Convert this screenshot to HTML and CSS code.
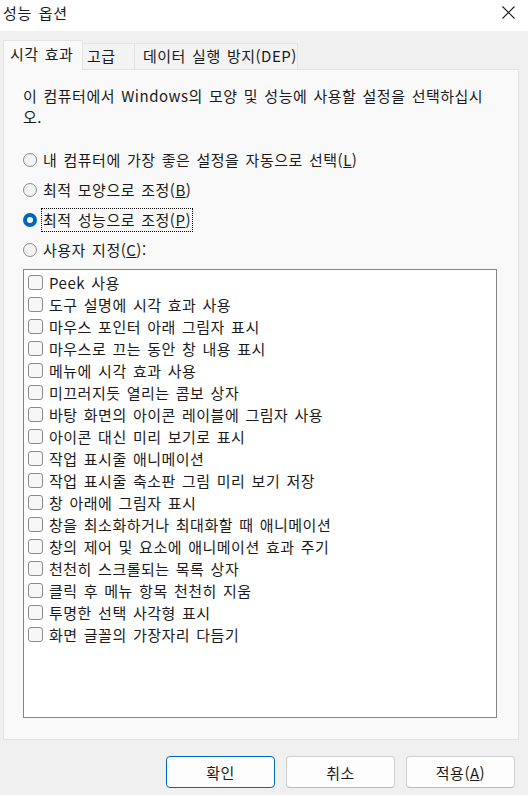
FILE: index.html
```html
<!DOCTYPE html>
<html lang="ko">
<head>
<meta charset="utf-8">
<title>성능 옵션</title>
<link rel="stylesheet" href="styles.css">
</head>
<body>
<div class="window">
  <div class="titlebar">
    <span class="title">성능 옵션</span>
    <svg class="close" width="13" height="13" viewBox="0 0 13 13"><path d="M0.5 0.5 L12.5 12.5 M12.5 0.5 L0.5 12.5" stroke="#1a1a1a" stroke-width="1.1" fill="none"/></svg>
  </div>
  <div class="tabs">
    <div class="tab active">시각 효과</div>
    <div class="tab">고급</div>
    <div class="tab">데이터 실행 방지(DEP)</div>
  </div>
  <div class="panel">
    <p class="desc">이 컴퓨터에서 Windows의 모양 및 성능에 사용할 설정을 선택하십시오.</p>
    <div class="radios">
      <div class="radio-row"><span class="radio"></span><span class="rlabel">내 컴퓨터에 가장 좋은 설정을 자동으로 선택(<u>L</u>)</span></div>
      <div class="radio-row"><span class="radio"></span><span class="rlabel">최적 모양으로 조정(<u>B</u>)</span></div>
      <div class="radio-row"><span class="radio checked"></span><span class="rlabel focus">최적 성능으로 조정(<u>P</u>)</span></div>
      <div class="radio-row"><span class="radio"></span><span class="rlabel">사용자 지정(<u>C</u>):</span></div>
    </div>
    <div class="list">
      <div class="item"><span class="box"></span>Peek 사용</div>
      <div class="item"><span class="box"></span>도구 설명에 시각 효과 사용</div>
      <div class="item"><span class="box"></span>마우스 포인터 아래 그림자 표시</div>
      <div class="item"><span class="box"></span>마우스로 끄는 동안 창 내용 표시</div>
      <div class="item"><span class="box"></span>메뉴에 시각 효과 사용</div>
      <div class="item"><span class="box"></span>미끄러지듯 열리는 콤보 상자</div>
      <div class="item"><span class="box"></span>바탕 화면의 아이콘 레이블에 그림자 사용</div>
      <div class="item"><span class="box"></span>아이콘 대신 미리 보기로 표시</div>
      <div class="item"><span class="box"></span>작업 표시줄 애니메이션</div>
      <div class="item"><span class="box"></span>작업 표시줄 축소판 그림 미리 보기 저장</div>
      <div class="item"><span class="box"></span>창 아래에 그림자 표시</div>
      <div class="item"><span class="box"></span>창을 최소화하거나 최대화할 때 애니메이션</div>
      <div class="item"><span class="box"></span>창의 제어 및 요소에 애니메이션 효과 주기</div>
      <div class="item"><span class="box"></span>천천히 스크롤되는 목록 상자</div>
      <div class="item"><span class="box"></span>클릭 후 메뉴 항목 천천히 지움</div>
      <div class="item"><span class="box"></span>투명한 선택 사각형 표시</div>
      <div class="item"><span class="box"></span>화면 글꼴의 가장자리 다듬기</div>
    </div>
  </div>
  <div class="buttons">
    <button class="btn default">확인</button>
    <button class="btn">취소</button>
    <button class="btn">적용(<u>A</u>)</button>
  </div>
</div>
</body>
</html>
```
FILE: styles.css
```css
html, body {
  margin: 0;
  padding: 0;
}
body {
  width: 528px;
  height: 795px;
  overflow: hidden;
  background: #f0f0f0;
  font-family: "Noto Sans CJK KR", "Noto Sans", sans-serif;
  font-size: 15px;
  letter-spacing: 0.5px;
  word-spacing: 1.5px;
  color: #1a1a1a;
}
.window {
  display: flex;
  flex-direction: column;
  height: 795px;
}
.titlebar {
  height: 31px;
  background: #ffffff;
  display: flex;
  align-items: center;
  justify-content: space-between;
  padding: 0 13px 0 3px;
}
.title {
  font-size: 15px;
  letter-spacing: 0.8px;
  line-height: 20px;
  margin-top: -6px;
}
.close {
  margin-top: -6px;
}
.tabs {
  display: flex;
  align-items: flex-end;
  padding: 10px 0 0 3px;
  height: 28px;
  position: relative;
  z-index: 1;
}
.tab {
  height: 26px;
  line-height: 24px;
  padding: 0 0 0 6px;
  border: 1px solid #e3e3e3;
  border-bottom: none;
  background: #f3f3f3;
  margin-left: -1px;
  box-sizing: border-box;
  white-space: nowrap;
}
.tab:nth-child(2) { width: 53px; padding-left: 4px; }
.tab:nth-child(3) { width: 164px; padding-left: 8px; }
.tab.active {
  height: 30px;
  margin-left: 0;
  margin-bottom: -1px;
  width: 80px;
  background: #f9f9f9;
  line-height: 26px;
  padding-left: 6px;
}
.panel {
  margin: 0 9px 0 3px;
  height: 671px;
  box-sizing: border-box;
  border: 1px solid #e3e3e3;
  background: #f9f9f9;
  padding: 15px 0 0 19px;
}
.desc {
  margin: 0;
  line-height: 21px;
  width: 470px;
}
.radios {
  margin-top: 18px;
  display: flex;
  flex-direction: column;
}
.radio-row {
  height: 30px;
  display: flex;
  align-items: center;
}
.radio {
  width: 14px;
  height: 14px;
  box-sizing: border-box;
  border-radius: 50%;
  border: 1px solid #8b8b8b;
  background: #f3f3f3;
  margin-right: 4px;
  flex: none;
}
.radio.checked {
  border: 4px solid #0067c0;
  background: #ffffff;
}
.rlabel {
  line-height: 22px;
  padding: 0 1px;
  border: 1px dotted transparent;
}
.rlabel.focus {
  border-color: #000000;
}
.list {
  margin-top: 4px;
  width: 474px;
  height: 449px;
  box-sizing: border-box;
  border: 1px solid #868686;
  background: #ffffff;
  padding: 1px 0 0 4px;
}
.item {
  height: 22px;
  display: flex;
  align-items: center;
}
.box {
  width: 15px;
  height: 15px;
  box-sizing: border-box;
  border: 1px solid #8b8b8b;
  border-radius: 3px;
  background: #f7f7f7;
  margin-right: 6px;
  flex: none;
}
.buttons {
  display: flex;
  justify-content: flex-end;
  gap: 11px;
  padding: 16px 13px 0 0;
}
.btn {
  width: 109px;
  height: 32px;
  box-sizing: border-box;
  border: 1px solid #d0d0d0;
  border-bottom-color: #bcbcbc;
  border-radius: 4px;
  background: #fdfdfd;
  font-family: inherit;
  font-size: 15px;
  letter-spacing: 0.5px;
  color: #1a1a1a;
  padding: 0;
}
.btn.default {
  border-color: #0067c0;
}
```
